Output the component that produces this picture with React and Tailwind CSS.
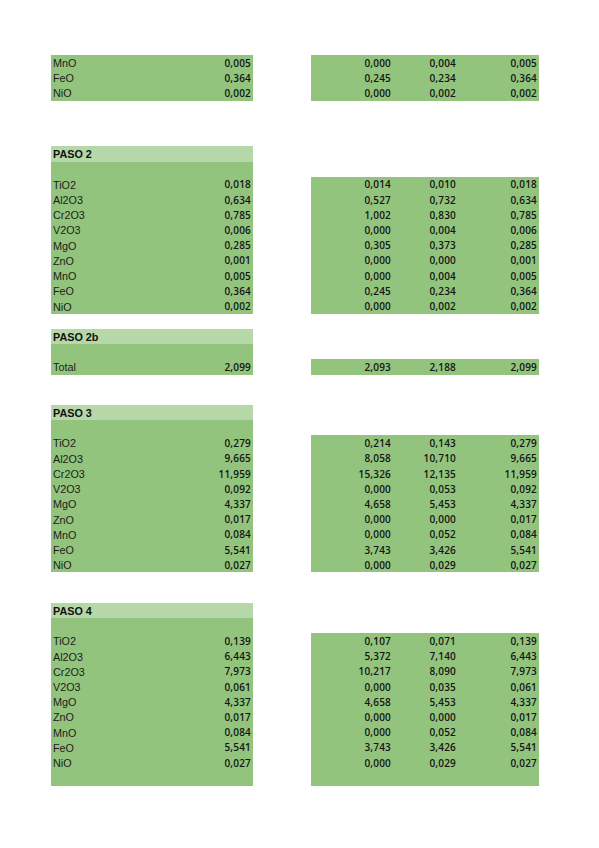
const ROW = "h-[15.23px] flex";

const top = [
    ["MnO", "0,005", ["0,000", "0,004", "0,005"]],
    ["FeO", "0,364", ["0,245", "0,234", "0,364"]],
    ["NiO", "0,002", ["0,000", "0,002", "0,002"]],
];

const paso2 = [
    ["TiO2", "0,018", ["0,014", "0,010", "0,018"]],
    ["Al2O3", "0,634", ["0,527", "0,732", "0,634"]],
    ["Cr2O3", "0,785", ["1,002", "0,830", "0,785"]],
    ["V2O3", "0,006", ["0,000", "0,004", "0,006"]],
    ["MgO", "0,285", ["0,305", "0,373", "0,285"]],
    ["ZnO", "0,001", ["0,000", "0,000", "0,001"]],
    ["MnO", "0,005", ["0,000", "0,004", "0,005"]],
    ["FeO", "0,364", ["0,245", "0,234", "0,364"]],
    ["NiO", "0,002", ["0,000", "0,002", "0,002"]],
];

const paso3 = [
    ["TiO2", "0,279", ["0,214", "0,143", "0,279"]],
    ["Al2O3", "9,665", ["8,058", "10,710", "9,665"]],
    ["Cr2O3", "11,959", ["15,326", "12,135", "11,959"]],
    ["V2O3", "0,092", ["0,000", "0,053", "0,092"]],
    ["MgO", "4,337", ["4,658", "5,453", "4,337"]],
    ["ZnO", "0,017", ["0,000", "0,000", "0,017"]],
    ["MnO", "0,084", ["0,000", "0,052", "0,084"]],
    ["FeO", "5,541", ["3,743", "3,426", "5,541"]],
    ["NiO", "0,027", ["0,000", "0,029", "0,027"]],
];

const paso4 = [
    ["TiO2", "0,139", ["0,107", "0,071", "0,139"]],
    ["Al2O3", "6,443", ["5,372", "7,140", "6,443"]],
    ["Cr2O3", "7,973", ["10,217", "8,090", "7,973"]],
    ["V2O3", "0,061", ["0,000", "0,035", "0,061"]],
    ["MgO", "4,337", ["4,658", "5,453", "4,337"]],
    ["ZnO", "0,017", ["0,000", "0,000", "0,017"]],
    ["MnO", "0,084", ["0,000", "0,052", "0,084"]],
    ["FeO", "5,541", ["3,743", "3,426", "5,541"]],
    ["NiO", "0,027", ["0,000", "0,029", "0,027"]],
];

const Num = ({children, className = ""}) => (
    <span
        className={`text-right text-[10px] font-semibold text-[#141414] tracking-[0.2px] ${className}`}
        style={{fontFamily: '"Open Sans", sans-serif'}}
    >
        {children}
    </span>
);

const DataRow = ({label, value, cols}) => (
    <div className={ROW}>
        <div className="w-[202px] bg-[#93c47d] flex items-center justify-between px-[2px] pt-[1px]">
            <span className="text-[10.8px] text-[#1c1c1c]">{label}</span>
            <Num>{value}</Num>
        </div>
        <div className="w-[58px]"/>
        <div className="w-[228px] bg-[#93c47d] flex items-center pr-[2px] pt-[1px]">
            <Num className="w-[80px]">{cols[0]}</Num>
            <Num className="w-[65px]">{cols[1]}</Num>
            <Num className="flex-1">{cols[2]}</Num>
        </div>
    </div>
);

const Blank = ({left = false, right = false}) => (
    <div className={ROW}>
        <div className={`w-[202px] ${left ? "bg-[#93c47d]" : ""}`}/>
        <div className="w-[58px]"/>
        <div className={`w-[228px] ${right ? "bg-[#93c47d]" : ""}`}/>
    </div>
);

const Header = ({title}) => (
    <>
        <div className={ROW}>
            <div className="w-[202px] bg-[#b6d7a8] flex items-center px-[2px] pt-[1px]">
                <span className="text-[10.8px] font-bold text-[#111]">{title}</span>
            </div>
        </div>
        <Blank left/>
    </>
);

const Rows = ({data}) => data.map(([l, v, c], i) => <DataRow key={i} label={l} value={v} cols={c}/>);

export default function App() {
    return (
        <div
            className="w-[599px] h-[848px] bg-white pt-[55px] pl-[51px] overflow-hidden"
            style={{fontFamily: '"Liberation Sans", Arial, sans-serif'}}
        >
            <Rows data={top}/>
            <Blank/><Blank/><Blank/>

            <Header title="PASO 2"/>
            <Rows data={paso2}/>
            <Blank/>

            <Header title="PASO 2b"/>
            <DataRow label="Total" value="2,099" cols={["2,093", "2,188", "2,099"]}/>
            <Blank/><Blank/>

            <Header title="PASO 3"/>
            <Rows data={paso3}/>
            <Blank/><Blank/>

            <Header title="PASO 4"/>
            <Rows data={paso4}/>
            <Blank left right/>
        </div>
    );
}
